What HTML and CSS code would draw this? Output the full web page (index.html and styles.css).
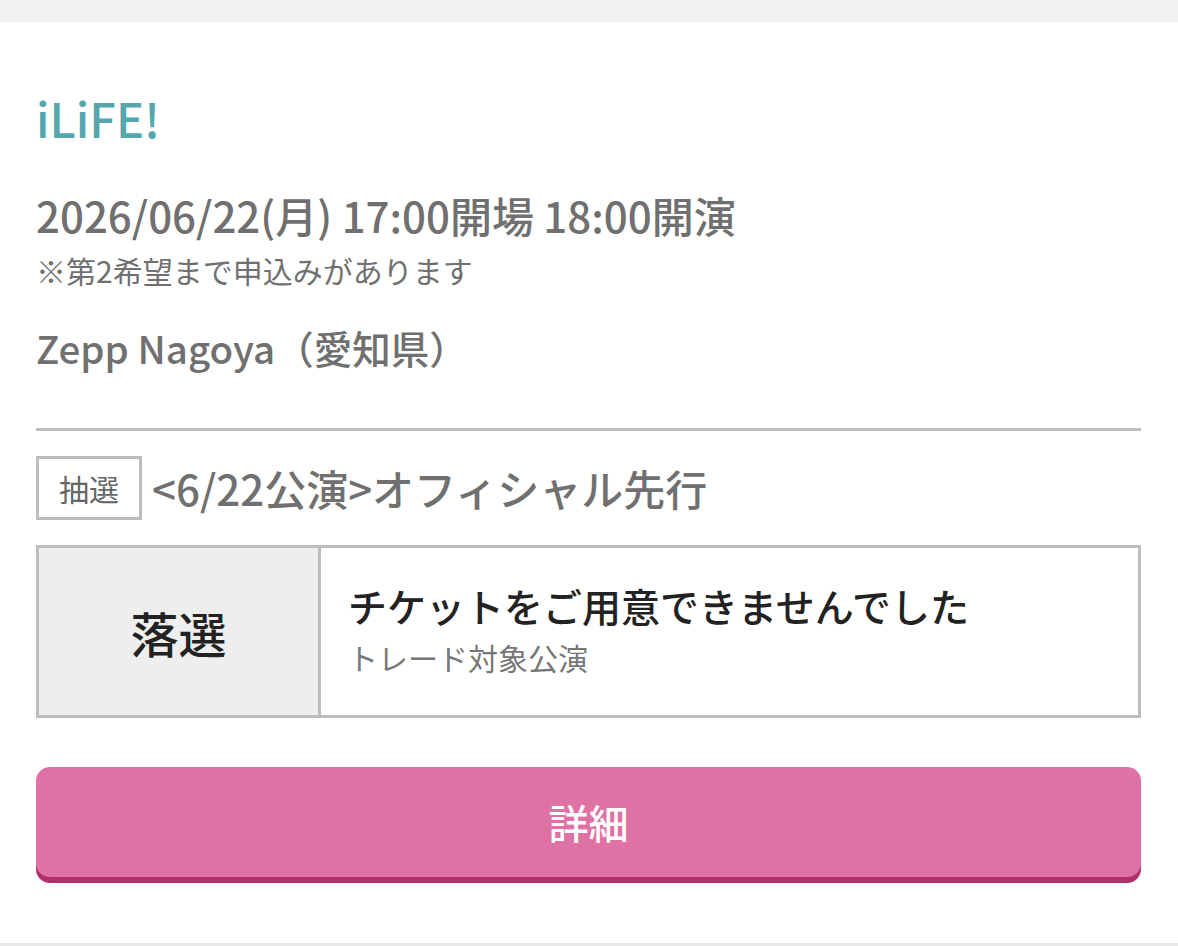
FILE: index.html
```html
<!DOCTYPE html>
<html lang="ja">
<head>
<meta charset="utf-8">
<link rel="stylesheet" href="styles.css">
</head>
<body>
<div class="topbar"></div>
<div class="card">
  <h1 class="title">iLiFE!</h1>
  <p class="date">2026/06/22(月) 17:00開場 18:00開演</p>
  <p class="note">※第2希望まで申込みがあります</p>
  <p class="venue">Zepp Nagoya（愛知県）</p>
  <hr class="divider">
  <div class="sale">
    <span class="tag">抽選</span>
    <span class="sale-name">&lt;6/22公演&gt;オフィシャル先行</span>
  </div>
  <div class="result">
    <div class="result-status">落選</div>
    <div class="result-body">
      <p class="result-main">チケットをご用意できませんでした</p>
      <p class="result-sub">トレード対象公演</p>
    </div>
  </div>
  <div class="btn">詳細</div>
</div>
</body>
</html>
```
FILE: styles.css
```css
html {
  background: #e9e9e9;
}
body {
  margin: 0;
  font-family: "Noto Sans CJK JP", "Noto Sans", sans-serif;
  color: #707070;
}
.topbar {
  height: 22px;
  background: #f2f2f2;
}
.card {
  background: #fff;
  padding: 66px 37px 66px 36px;
  display: flex;
  flex-direction: column;
}
.card > * {
  flex-shrink: 0;
}
.title {
  margin: 0;
  font-size: 47px;
  line-height: 60px;
  font-weight: 500;
  color: #55a6af;
}
.date {
  margin: 42px 0 0;
  font-size: 42px;
  line-height: 50px;
  font-weight: 500;
}
.note {
  margin: 12px 0 0;
  font-size: 30px;
  line-height: 36px;
}
.venue {
  margin: 35px 0 0;
  font-size: 38.5px;
  line-height: 48px;
  font-weight: 500;
}
.divider {
  margin: 57px 0 0;
  border: 0;
  height: 3px;
  background: #bfbfbf;
}
.sale {
  margin-top: 25px;
  display: flex;
  align-items: center;
  gap: 10px;
}
.tag {
  box-sizing: border-box;
  height: 64px;
  width: 106px;
  border: 3px solid #bdbdbd;
  display: flex;
  align-items: center;
  justify-content: center;
  font-size: 30px;
  color: #666;
}
.sale-name {
  font-size: 42px;
  line-height: 50px;
  font-weight: 500;
}
.result {
  margin-top: 25px;
  display: flex;
  height: 173px;
  box-sizing: border-box;
  border: 3px solid #bdbdbd;
}
.result-status {
  width: 279px;
  background: #eeeeee;
  border-right: 3px solid #bdbdbd;
  display: flex;
  align-items: center;
  justify-content: center;
  font-size: 48px;
  font-weight: 500;
  color: #222;
}
.result-body {
  flex: 1;
  padding: 0 0 6px 27px;
  display: flex;
  flex-direction: column;
  justify-content: center;
}
.result-main {
  margin: 0;
  font-size: 39px;
  line-height: 50px;
  font-weight: 500;
  color: #222;
}
.result-sub {
  margin: 7px 0 0;
  font-size: 30px;
  line-height: 40px;
  color: #777;
}
.btn {
  margin-top: 49px;
  height: 110px;
  border-radius: 14px;
  background: #df72a5;
  box-shadow: 0 6px 0 #b1306a;
  display: flex;
  align-items: center;
  justify-content: center;
  font-size: 40px;
  color: #fff;
  font-weight: 500;
}
```
